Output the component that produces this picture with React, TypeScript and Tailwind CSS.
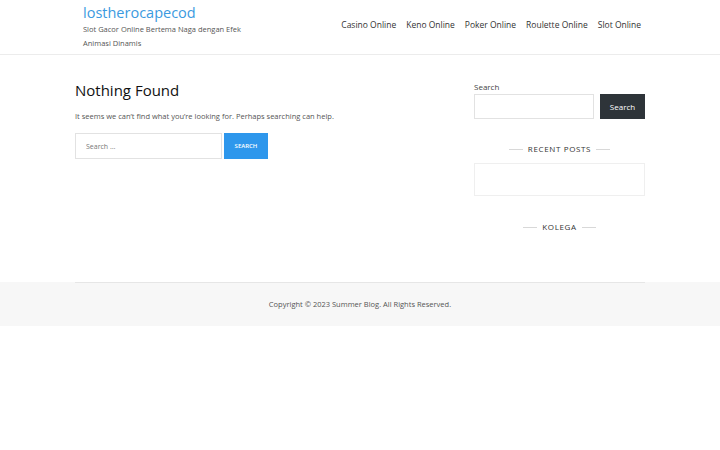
import React from 'react';

const NAV = ['Casino Online', 'Keno Online', 'Poker Online', 'Roulette Online', 'Slot Online'];

function WidgetTitle({ children }: { children: React.ReactNode }) {
  return (
    <div className="flex items-center justify-center gap-[5px]">
      <span className="h-px w-[14px] bg-[#d8d8d8]" />
      <h3 className="text-[8px] font-medium tracking-[0.08em] text-[#333] uppercase">{children}</h3>
      <span className="h-px w-[14px] bg-[#d8d8d8]" />
    </div>
  );
}

export default function App() {
  return (
    <div className="min-h-[450px] bg-white text-[#333]" style={{ fontFamily: '"Open Sans", "Liberation Sans", sans-serif' }}>
      {/* header */}
      <header className="h-[55px] border-b border-[#ececec] flex items-start justify-between pl-[83px] pr-[79px]">
        <div className="w-[170px] pt-[3px]">
          <a className="block text-[14.5px] leading-[20px] font-medium text-[#3b9ae0]">lostherocapecod</a>
          <p className="-mt-[1px] text-[7.5px] leading-[14px] text-[#555]">Slot Gacor Online Bertema Naga dengan Efek Animasi Dinamis</p>
        </div>
        <nav className="flex gap-[10px] h-full items-center pb-[3px]">
          {NAV.map((n) => (
            <a key={n} className="text-[8.5px] font-medium text-[#333]">{n}</a>
          ))}
        </nav>
      </header>

      {/* content */}
      <div className="mx-[75px] flex gap-[40px] pt-[25px] h-[227px]">
        <main className="flex-1">
          <h1 className="text-[15px] leading-[20px] text-[#111]">Nothing Found</h1>
          <p className="mt-[10px] text-[7.5px] leading-[12px] text-[#555]">It seems we can&rsquo;t find what you&rsquo;re looking for. Perhaps searching can help.</p>
          <form className="mt-[11px] flex gap-[2px]">
            <input
              placeholder="Search …"
              className="w-[147px] h-[26px] border border-[#e2e2e2] px-[10px] text-[7px] text-[#555] placeholder:text-[#777] outline-none"
            />
            <button type="button" className="w-[44px] h-[26px] bg-[#2e97ec] text-white text-[6px] font-semibold uppercase">Search</button>
          </form>
        </main>

        <aside className="w-[171px] pt-[2px]">
          <label className="block text-[8px] leading-[10px] text-[#444]">Search</label>
          <div className="mt-[2px] flex gap-[6px]">
            <input className="min-w-0 flex-1 h-[25px] border border-[#e2e2e2] outline-none" />
            <button type="button" className="w-[45px] h-[25px] bg-[#2e3439] text-white text-[8px]">Search</button>
          </div>
          <div className="mt-[24px]">
            <WidgetTitle>Recent Posts</WidgetTitle>
          </div>
          <div className="mt-[8px] h-[33px] border border-[#efefef]" />
          <div className="mt-[25px]">
            <WidgetTitle>Kolega</WidgetTitle>
          </div>
        </aside>
      </div>

      {/* footer */}
      <footer className="bg-[#f7f7f7] h-[44px]">
        <div className="mx-[75px] h-full border-t border-[#e6e6e6] flex items-center justify-center">
          <p className="text-[7.5px] text-[#555]">Copyright © 2023 Summer Blog. All Rights Reserved.</p>
        </div>
      </footer>
    </div>
  );
}
